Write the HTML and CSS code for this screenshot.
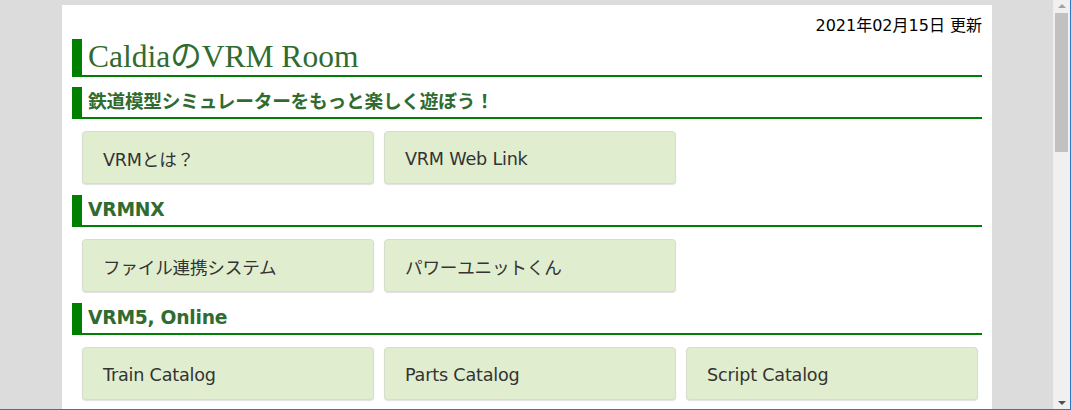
FILE: index.html
```html
<!DOCTYPE html>
<html lang="ja">
<head>
<meta charset="utf-8">
<title>CaldiaのVRM Room</title>
<link rel="stylesheet" href="styles.css">
</head>
<body>
<div class="window">
  <div class="viewport">
    <div class="page">
      <div class="updated">2021年02月15日 更新</div>
      <h1 class="title">CaldiaのVRM Room</h1>
      <h2 class="section">鉄道模型シミュレーターをもっと楽しく遊ぼう！</h2>
      <div class="links">
        <a class="btn" href="#">VRMとは？</a>
        <a class="btn" href="#">VRM Web Link</a>
      </div>
      <h2 class="section">VRMNX</h2>
      <div class="links">
        <a class="btn" href="#">ファイル連携システム</a>
        <a class="btn" href="#">パワーユニットくん</a>
      </div>
      <h2 class="section">VRM5, Online</h2>
      <div class="links">
        <a class="btn" href="#">Train Catalog</a>
        <a class="btn" href="#">Parts Catalog</a>
        <a class="btn" href="#">Script Catalog</a>
      </div>
    </div>
  </div>
  <div class="scrollbar">
    <div class="arrow up"></div>
    <div class="track"><div class="thumb"></div></div>
    <div class="arrow down"></div>
  </div>
</div>
</body>
</html>
```
FILE: styles.css
```css
html, body {
  margin: 0;
  padding: 0;
  overflow: hidden;
  background: #dcdcdc;
}
body {
  font-family: "DejaVu Sans", "Noto Sans CJK JP", sans-serif;
}
.window {
  width: 1070px;
  height: 409px;
  border-right: 1px solid #2b78c5;
  border-bottom: 1px solid #2b78c5;
  display: flex;
  overflow: hidden;
}
.viewport {
  width: 1053px;
  flex: none;
  background: #dcdcdc;
  overflow: hidden;
}
.page {
  width: 910px;
  margin: 5px 0 0 62px;
  background: #fff;
  padding: 10px 10px 20px;
  height: 500px;
}
.updated {
  text-align: right;
  font-size: 16px;
  line-height: 22px;
  color: #000;
}
.title {
  margin: 2px 0 0;
  border-left: 10px solid #008000;
  border-bottom: 2px solid #008000;
  padding-left: 6px;
  height: 36px;
  line-height: 36px;
  font-family: "Liberation Serif", "Noto Sans CJK JP", serif;
  font-weight: normal;
  font-size: 31.5px;
  color: #306b30;
}
.section {
  margin: 10px 0 0;
  border-left: 10px solid #008000;
  border-bottom: 2px solid #008000;
  padding-left: 6px;
  height: 30px;
  line-height: 30px;
  font-size: 18.72px;
  letter-spacing: -0.25px;
  font-weight: bold;
  color: #306b30;
}
.links {
  display: grid;
  grid-template-columns: repeat(3, 292px);
  gap: 10px;
  padding-left: 10px;
  margin: 12px 0 11px;
}
.btn {
  box-sizing: border-box;
  height: 53px;
  display: flex;
  align-items: center;
  padding: 2px 0 0 20px;
  background: #e0eecf;
  border: 1px solid #d6ddcc;
  border-radius: 4px;
  box-shadow: 0 1px 1px rgba(0, 0, 0, 0.12);
  color: #333;
  text-decoration: none;
  font-size: 17.6px;
  letter-spacing: -0.2px;
}
.scrollbar {
  width: 17px;
  flex: none;
  background: #f0f0f0;
  display: flex;
  flex-direction: column;
  align-items: center;
}
.arrow {
  width: 0;
  height: 0;
  border-left: 4px solid transparent;
  border-right: 4px solid transparent;
  flex: none;
}
.arrow.up {
  margin: 4px 0 5px;
  border-bottom: 4px solid #a3a3a3;
}
.track {
  flex: 1;
  width: 100%;
  display: flex;
  justify-content: center;
}
.thumb {
  width: 13px;
  height: 139px;
  background: #c1c1c1;
}
.arrow.down {
  margin: 5px 0 4px;
  border-top: 4px solid #505050;
}
```
